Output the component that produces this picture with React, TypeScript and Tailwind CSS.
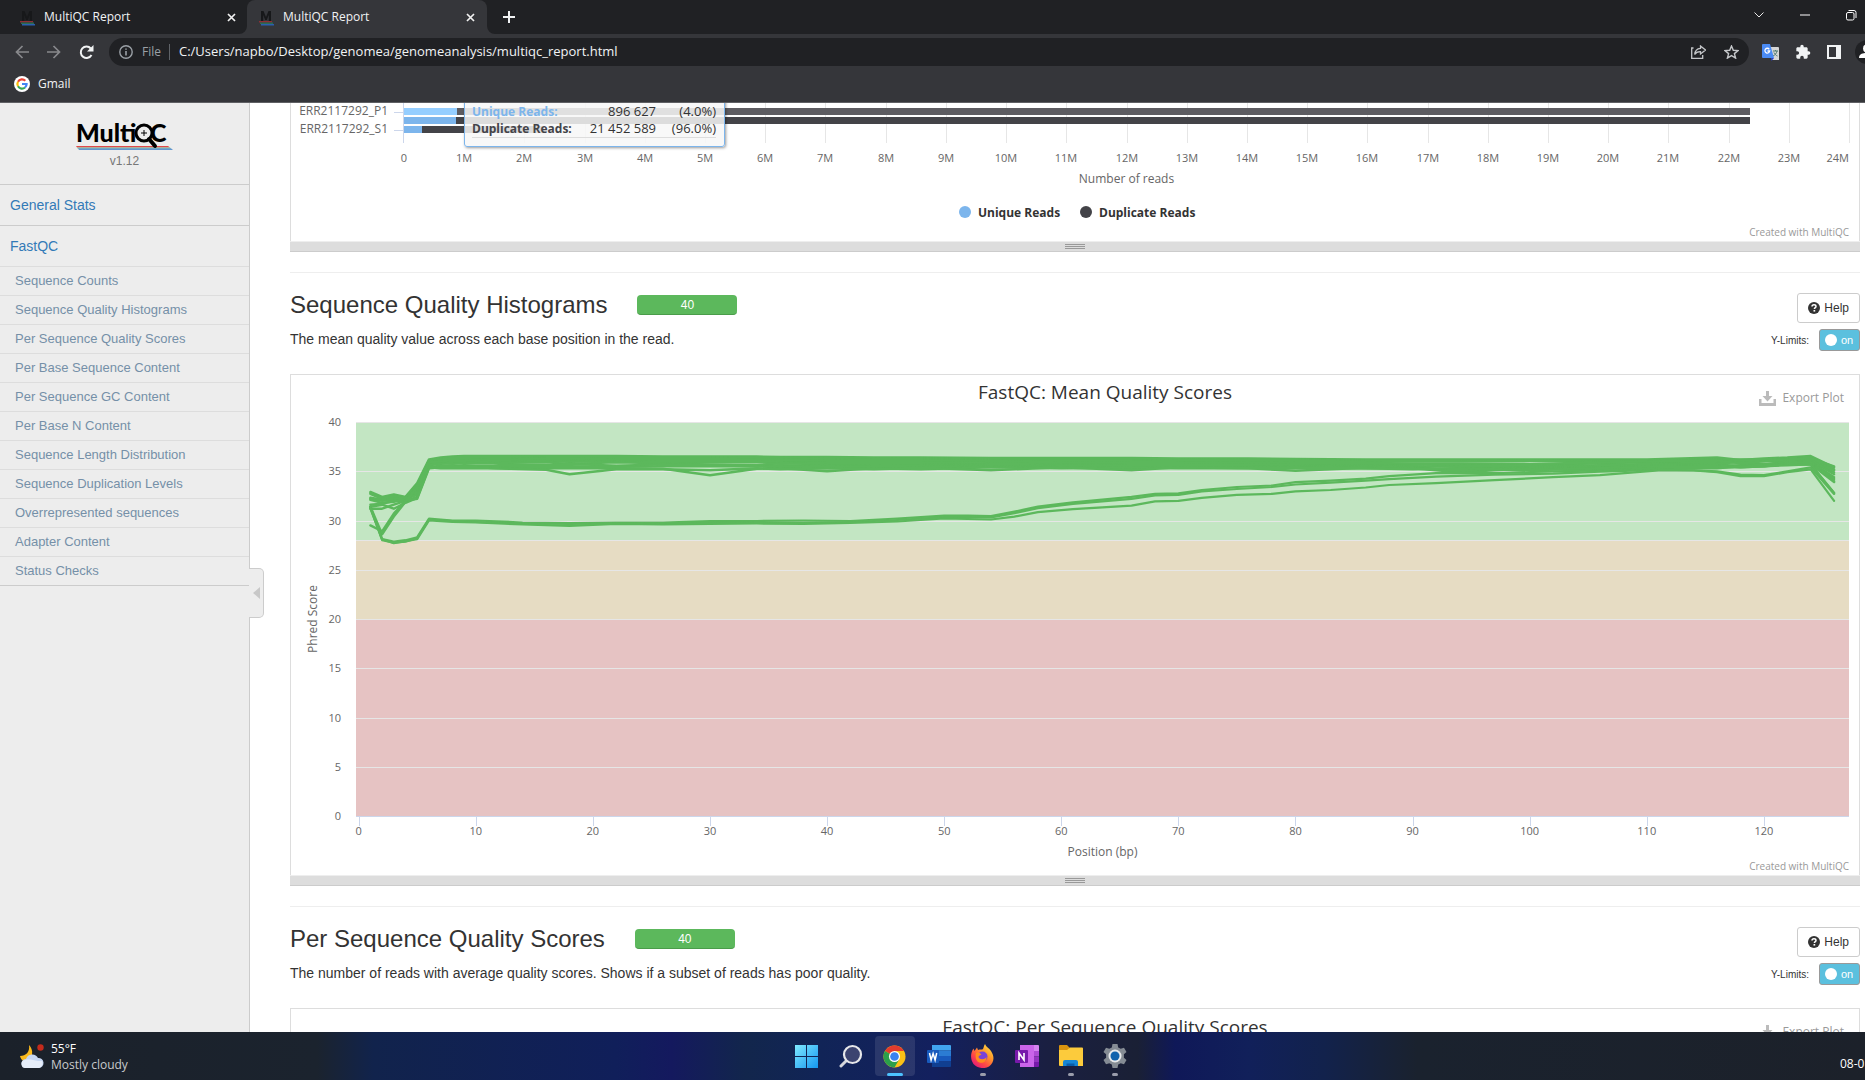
import { useLayoutEffect, useRef, useState, type ReactNode } from "react";

/* ---------- data ---------- */

const fastqcLinks = [
  "Sequence Counts",
  "Sequence Quality Histograms",
  "Per Sequence Quality Scores",
  "Per Base Sequence Content",
  "Per Sequence GC Content",
  "Per Base N Content",
  "Sequence Length Distribution",
  "Sequence Duplication Levels",
  "Overrepresented sequences",
  "Adapter Content",
  "Status Checks",
];

const bases = [
  1, 2, 3, 4, 5, 6, 7, 8, 9, 11, 13, 16, 18, 22, 26, 30, 34, 36, 40, 44, 48, 54, 60, 66, 70, 76, 80, 86, 90, 94, 100, 106,
  110, 116, 118, 120, 122, 124, 126,
];

const highReads: number[][] = [
  [32.9, 32.4, 32.65, 32.4, 33.8, 36.2, 36.4, 36.5, 36.55, 36.55, 36.55, 36.55, 36.55, 36.55, 36.5, 36.5, 36.5, 36.45, 36.45, 36.4, 36.4, 36.35, 36.35, 36.35, 36.3, 36.3, 36.25, 36.2, 36.2, 36.2, 36.2, 36.2, 36.2, 36.4, 36.15, 36.3, 36.4, 36.55, 35.4],
  [32.8, 32.3, 32.5, 32.3, 33.6, 36.1, 36.3, 36.4, 36.45, 36.45, 36.45, 36.4, 36.4, 36.4, 36.4, 36.4, 36.35, 36.35, 36.3, 36.3, 36.25, 36.2, 36.2, 36.2, 36.2, 36.15, 36.15, 36.1, 36.1, 36.1, 36.1, 36.1, 36.1, 36.15, 36.2, 36.2, 36.3, 36.4, 35.2],
  [32.7, 32.2, 32.4, 32.2, 33.3, 36, 36.2, 36.3, 36.3, 36.3, 36.3, 36.25, 36.25, 36.25, 36.25, 36.25, 36.2, 36.2, 36.2, 36.15, 36.15, 36.1, 36.1, 36.1, 36.05, 36.05, 36.05, 36, 36, 36, 36.05, 36, 36, 36.05, 36.1, 36.1, 36.2, 36.3, 35.1],
  [32.3, 32.1, 32.2, 32.3, 33, 35.9, 36.05, 36.15, 36.15, 36.15, 36.15, 36.1, 36.1, 36.1, 36.1, 36.1, 36.1, 36.05, 36.05, 36, 36, 35.95, 35.95, 35.95, 35.9, 35.85, 35.75, 35.7, 35.75, 35.7, 35.6, 35.8, 35.9, 35.9, 36, 36, 36.1, 36.2, 34.9],
  [32.2, 32, 32.1, 32.1, 32.8, 35.8, 35.95, 36, 36.05, 36, 36, 36, 35.95, 36, 35.95, 35.95, 35.95, 35.9, 35.85, 35.85, 35.85, 35.8, 35.8, 35.8, 35.75, 35.7, 35.7, 35.65, 35.7, 35.6, 35.5, 35.6, 35.75, 35.8, 35.9, 35.7, 36, 36.1, 34.7],
  [32.1, 31.8, 31.9, 32.2, 32.6, 35.7, 35.85, 35.9, 35.9, 35.9, 35.85, 35.9, 35.75, 35.9, 35.8, 35.7, 35.65, 35.8, 35.7, 35.7, 35.7, 35.65, 35.65, 35.6, 35.65, 35.6, 35.6, 35.55, 35.5, 35.45, 35.45, 35.5, 35.6, 35.7, 35.5, 35.7, 35.9, 36, 34.4],
  [31.6, 31.7, 32, 32, 32.4, 35.6, 35.75, 35.8, 35.75, 35.8, 35.7, 35.6, 35.75, 35.55, 35.7, 35.65, 35.55, 35.6, 35.55, 35.6, 35.55, 35.5, 35.55, 35.5, 35.5, 35.5, 35.45, 35.5, 35.4, 35.1, 35.4, 35.35, 35.5, 35.6, 35.4, 35.5, 35.8, 35.9, 34.2],
  [31.4, 31.6, 31.2, 31.8, 32.3, 35.4, 35.55, 35.6, 35.5, 35.5, 35.5, 35.5, 35.5, 35.45, 35.5, 35.5, 35.5, 35.4, 35.45, 35.4, 35.4, 35.45, 35.4, 35.4, 35.4, 35.35, 35.4, 35.3, 35.3, 34.9, 35.3, 35.3, 35.4, 35.5, 35.6, 35.7, 35.8, 35.8, 34],
  [31.2, 31.2, 31.6, 32, 32.2, 35.3, 35.4, 35.4, 35.45, 35.35, 35.3, 35.3, 35.3, 35.3, 35.25, 34.6, 35.25, 35.3, 35, 35.3, 35.2, 35.4, 35.3, 35.35, 35.3, 35.3, 35.05, 35.35, 35.3, 35.1, 35.3, 35.25, 35.3, 35.4, 35.5, 35.6, 35.7, 35.7, 33.9],
  [29.5, 28.9, 30.7, 32, 33.2, 35.4, 35.3, 35.3, 35.3, 35.3, 35.25, 35.15, 34.7, 35.2, 35.2, 35.1, 35.3, 35.2, 35.3, 35.2, 35.35, 35.1, 35.4, 35.1, 35.4, 35.3, 35.3, 35.3, 35.2, 35.3, 35.1, 35.3, 35.4, 35.4, 35.4, 35.5, 35.7, 35.7, 32.8],
  [31.4, 28.6, 30.4, 31.9, 33.4, 35.9, 36, 36.1, 36.1, 36.2, 36.2, 36.3, 36.3, 36.2, 36.2, 36.2, 36.2, 36.15, 36.1, 36.1, 36.1, 36.05, 35.9, 35.85, 35.85, 35.9, 35.85, 35.85, 35.8, 35.8, 35.75, 35.9, 36, 36.1, 35.8, 36, 36.2, 36.3, 35.5],
];

const lowBases = [
  1, 2, 3, 4, 5, 6, 8, 10, 14, 18, 22, 26, 30, 34, 38, 42, 46, 50, 52, 54, 56, 58, 61, 66, 68, 70, 72, 75, 78, 80, 83, 86, 88, 92, 97,
  102, 106, 111, 114, 116, 118, 120, 122, 124, 126,
];

const lowReads: number[][] = [
  [31.4, 28.1, 27.85, 28, 28.3, 30.2, 30, 30, 29.8, 29.75, 29.8, 29.8, 29.95, 29.95, 30, 29.95, 30.2, 30.5, 30.5, 30.45, 30.9, 31.4, 31.85, 32.4, 32.7, 32.75, 33.1, 33.4, 33.55, 33.9, 34.05, 34.25, 34.5, 34.8, 34.8, 35, 35.1, 35.3, 35.3, 35.3, 35.5, 35.5, 35.6, 35.7, 32.8],
  [31.3, 28, 27.75, 27.85, 28.2, 30.1, 29.95, 29.85, 29.7, 29.65, 29.7, 29.75, 29.75, 29.8, 29.8, 29.85, 30.05, 30.35, 30.35, 30.3, 30.75, 31.25, 31.7, 32.2, 32.55, 32.6, 32.95, 33.2, 33.4, 33.65, 33.85, 34.05, 34.2, 34.45, 34.65, 34.75, 34.95, 35.15, 35.1, 35, 34.65, 34.6, 35, 35.4, 32.7],
  [31.2, 28.1, 27.7, 27.9, 28.1, 30, 29.85, 29.8, 29.6, 29.45, 29.65, 29.6, 29.65, 29.7, 29.65, 29.75, 29.9, 30.2, 30.15, 30.1, 30.4, 30.85, 31.15, 31.5, 31.95, 32, 32.3, 32.6, 32.7, 32.95, 33.1, 33.35, 33.6, 33.8, 34.1, 34.4, 34.6, 35.1, 35.1, 34.9, 34.5, 34.5, 34.9, 35.2, 32],
];

/* ---------- chart helpers ---------- */

function useWidth() {
  const ref = useRef<HTMLDivElement>(null);
  const [width, setWidth] = useState(1568);
  useLayoutEffect(() => {
    const el = ref.current;
    if (!el) return;
    const update = () => setWidth(el.clientWidth);
    update();
    const observer = new ResizeObserver(update);
    observer.observe(el);
    return () => observer.disconnect();
  }, []);
  return { ref, width };
}

function Panel({ children, open }: { children: ReactNode; open?: boolean }) {
  return (
    <div className={open ? "border-x border-[#ddd]" : "border border-b-0 border-[#ddd]"}>
      {children}
      <div className="-mx-px flex h-[11px] items-center justify-center border-t border-b border-t-[#eee] border-b-[#ccc] bg-[#ddd]">
        <div className="flex flex-col gap-px">
          <div className="h-px w-5 bg-[#999]" />
          <div className="h-px w-5 bg-[#999]" />
          <div className="h-px w-5 bg-[#999]" />
        </div>
      </div>
    </div>
  );
}

function CountsChart() {
  const { ref, width } = useWidth();
  const left = 113;
  const right = width - 10;
  const x = (millions: number) => Math.round(left + ((right - left) * millions) / 24);
  const rows = [
    { y: 5, unique: 0.88, total: 22.35, light: true },
    { y: 14, unique: 0.86, total: 22.35, light: false },
    { y: 23, unique: 0.3, total: 2.33, light: false },
  ];
  return (
    <div ref={ref} className="relative h-[138px]">
      <svg width={width} height={138} className="block overflow-hidden font-['Open_Sans',sans-serif]">
        {Array.from({ length: 24 }, (_, i) => (
          <rect key={i} x={x(i + 1)} y={0} width={1} height={40} fill="#e6e6e6" />
        ))}
        <rect x={left - 1} y={0} width={1} height={40} fill="#ccd6eb" />
        <rect x={left - 10} y={9} width={10} height={1} fill="#ccd6eb" />
        <rect x={left - 10} y={27} width={10} height={1} fill="#ccd6eb" />
        {rows.map((r) => (
          <g key={r.y}>
            <rect x={x(r.unique)} y={r.y} width={x(r.total) - x(r.unique)} height={7} fill={r.light ? "#5d5c61" : "#434348"} />
            <rect x={left} y={r.y} width={x(r.unique) - left} height={7} fill={r.light ? "#95ceff" : "#7cb5ec"} />
          </g>
        ))}
        <g className="text-[12px]" fill="#666" textAnchor="end">
          <text x={97} y={12}>ERR2117292_P1</text>
          <text x={97} y={30}>ERR2117292_S1</text>
        </g>
        <g className="text-[11px]" fill="#666">
          {Array.from({ length: 25 }, (_, i) => (
            <text key={i} x={i === 24 ? right : x(i)} y={59} textAnchor={i === 24 ? "end" : "middle"}>
              {i === 0 ? "0" : `${i}M`}
            </text>
          ))}
        </g>
        <text x={(left + right) / 2} y={80} textAnchor="middle" className="text-[12px]" fill="#666">
          Number of reads
        </text>
        <g className="text-[12px] font-bold" fill="#333" transform={`translate(${Math.round(width / 2) - 110} 0)`}>
          <circle cx={0} cy={109} r={6} fill="#7cb5ec" />
          <text x={13} y={114}>Unique Reads</text>
          <circle cx={121} cy={109} r={6} fill="#434348" />
          <text x={134} y={114}>Duplicate Reads</text>
        </g>
        <text x={right} y={133} textAnchor="end" className="text-[10px]" fill="#999">
          Created with MultiQC
        </text>
      </svg>
      <div
        className="absolute -top-4 w-[261px] rounded-[3px] border border-[#7cb5ec] bg-[#f7f7f7]/85 pt-[15px] pr-2 pb-2 pl-[7px] font-['Open_Sans',sans-serif] text-[#333] shadow-[1px_1px_3px_rgba(0,0,0,0.4)]"
        style={{ left: x(1) }}
      >
        <table className="w-full border-collapse leading-[17px]">
          <tbody>
            <tr>
              <th scope="row" className="p-0 text-left text-[12px] font-bold text-[#7cb5ec]">Unique Reads:</th>
              <td className="p-0 text-right text-[13px]">896 627</td>
              <td className="w-[60px] p-0 text-right text-[13px]">(4.0%)</td>
            </tr>
            <tr className="border-b border-[#ddd]">
              <th scope="row" className="p-0 text-left text-[12px] font-bold text-[#434348]">Duplicate Reads:</th>
              <td className="p-0 text-right text-[13px]">21 452 589</td>
              <td className="w-[60px] p-0 text-right text-[13px]">(96.0%)</td>
            </tr>
          </tbody>
        </table>
      </div>
    </div>
  );
}

function ExportButton() {
  return (
    <button type="button" className="absolute top-[14px] right-[15px] flex items-center gap-[6px] font-['Open_Sans',sans-serif] text-[12px] leading-[18px] text-[#999]">
      <svg width="17" height="15" viewBox="0 0 17 15" fill="#bbb">
        <path d="M7 0h3v5h3.5l-5 5.5L3.5 5H7z" />
        <path d="M0 8h2.500v4h12V8H17v7H0z" />
      </svg>
      Export Plot
    </button>
  );
}

function QualityChart() {
  const { ref, width } = useWidth();
  const left = 65;
  const right = width - 10;
  const x = (bp: number) => left + ((right - left) * (bp + 0.23)) / 127.5;
  const y = (q: number) => 441 - q * 9.85;
  const points = (xs: number[], ys: number[]) => ys.map((v, i) => `${x(xs[i]).toFixed(1)},${y(v).toFixed(1)}`).join(" ");
  const bands = [
    { from: 28, to: 40, fill: "#c3e6c3" },
    { from: 20, to: 28, fill: "#e6dcc3" },
    { from: 0, to: 20, fill: "#e6c3c3" },
  ];
  return (
    <div ref={ref} className="relative h-[500px]">
      <svg width={width} height={500} className="block font-['Open_Sans',sans-serif]">
        <text x={width / 2 + 30} y={24} textAnchor="middle" className="text-[19px]" fill="#333">
          FastQC: Mean Quality Scores
        </text>
        {bands.map((b) => (
          <rect key={b.from} x={left} width={right - left} y={Math.round(y(b.to))} height={Math.round(y(b.from)) - Math.round(y(b.to))} fill={b.fill} />
        ))}
        {[5, 10, 15, 20, 25, 28, 30, 35, 40].map((q) => (
          <rect key={q} x={left} width={right - left} y={Math.round(y(q))} height={1} fill="#e6e6e6" />
        ))}
        <rect x={left} y={441} width={right - left} height={1} fill="#ccd6eb" />
        <g className="text-[11px]" fill="#666">
          {[0, 5, 10, 15, 20, 25, 30, 35, 40].map((q) => (
            <text key={q} x={50} y={Math.round(y(q)) + 4} textAnchor="end">{q}</text>
          ))}
          {[0, 10, 20, 30, 40, 50, 60, 70, 80, 90, 100, 110, 120].map((bp) => (
            <g key={bp}>
              <rect x={Math.round(x(bp))} y={441} width={1} height={10} fill="#ccd6eb" />
              <text x={x(bp)} y={460} textAnchor="middle">{bp}</text>
            </g>
          ))}
        </g>
        <g className="text-[12px]" fill="#666" textAnchor="middle">
          <text x={(left + right) / 2} y={481}>Position (bp)</text>
          <text transform="translate(26 244) rotate(-90)">Phred Score</text>
        </g>
        <g fill="none" stroke="#5cb85c" strokeLinejoin="round" strokeLinecap="round">
          {highReads.map((r, i) => (
            <polyline key={i} points={points(bases, r)} strokeWidth={2.4} />
          ))}
          {lowReads.map((r, i) => (
            <polyline key={i} points={points(lowBases, r)} strokeWidth={2.2} />
          ))}
        </g>
        <text x={right} y={495} textAnchor="end" className="text-[10px]" fill="#999">
          Created with MultiQC
        </text>
      </svg>
      <ExportButton />
    </div>
  );
}

function ScoresChart() {
  const { ref, width } = useWidth();
  return (
    <div ref={ref} className="relative h-[500px]">
      <svg width={width} height={500} className="block font-['Open_Sans',sans-serif]">
        <text x={width / 2 + 30} y={25} textAnchor="middle" className="text-[19px]" fill="#333">
          FastQC: Per Sequence Quality Scores
        </text>
      </svg>
      <ExportButton />
    </div>
  );
}

function Section({ title, text, children }: { title: string; text: string; children: ReactNode }) {
  return (
    <section className="mt-5 border-t border-[#eee] pt-5">
      <div className="flex justify-between pb-[23px]">
        <div>
          <div className="flex h-6 items-center gap-[30px]">
            <h3 className="text-[24px] leading-[26px] text-[#333]">{title}</h3>
            <div className="h-5 w-[100px] rounded-[4px] border-b border-[#4a9c4a] bg-[#5cb85c] text-center text-[12px] leading-5 text-white">40</div>
          </div>
          <p className="mt-3 text-[14px] leading-5 text-[#333]">{text}</p>
        </div>
        <div className="flex flex-col items-end gap-[6px]">
          <button type="button" className="flex h-[30px] items-center gap-1 rounded-[3px] border border-[#ccc] bg-white px-[10px] text-[12px] text-[#333]">
            <svg width="12" height="12" viewBox="0 0 12 12">
              <circle cx="6" cy="6" r="6" fill="#333" />
              <path d="M4 4.6C4 3.4 4.9 2.7 6 2.7s2 .7 2 1.7c0 1.2-1.6 1.2-1.6 2.5" fill="none" stroke="#fff" strokeWidth="1.5" />
              <rect x="5.5" y="8" width="1.7" height="1.6" fill="#fff" />
            </svg>
            Help
          </button>
          <div className="flex items-center gap-[10px] text-[10px] text-[#333]">
            <span>Y-Limits:</span>
            <button type="button" aria-label="Y-Limits on" className="flex h-[22px] w-[41px] items-center gap-1 rounded-[3px] border border-[#999] bg-[#5bc0de] px-[5px] text-[11px] text-white">
              <span className="size-3 rounded-full bg-white" />
              on
            </button>
          </div>
        </div>
      </div>
      {children}
    </section>
  );
}

/* ---------- browser chrome ---------- */

function Favicon() {
  return (
    <svg width="15" height="17" viewBox="0 0 15 17">
      <path d="M2 12V2h2.500L7 8l2.500-6H12v10h-2.200V6L7.800 11H6.200L4.200 6v6z" fill="#17181a" />
      <path d="M0 12h13v1.500H0z" fill="#8f2f35" />
      <path d="M1 13.500h13V15H1z" fill="#2c6b52" />
      <path d="M2 15h13v1.500H2z" fill="#2a5fae" />
    </svg>
  );
}

function Cross() {
  return (
    <svg width="9" height="9" viewBox="0 0 9 9" stroke="#f1f1f1" strokeWidth="1.700">
      <path d="M1 1l7 7M8 1L1 8" />
    </svg>
  );
}

function Tab({ active }: { active?: boolean }) {
  return (
    <div
      className={
        active
          ? "relative flex h-[34px] w-60 items-center rounded-t-lg bg-[#35363a] pr-3 pl-3"
          : "flex h-[34px] w-[247px] items-center pr-[11px] pl-5"
      }
    >
      {active && (
        <>
          <svg className="absolute bottom-0 -left-2" width="8" height="8"><path d="M8 0v8H0a8 8 0 0 0 8-8z" fill="#35363a" /></svg>
          <svg className="absolute -right-2 bottom-0" width="8" height="8"><path d="M0 0v8h8a8 8 0 0 1-8-8z" fill="#35363a" /></svg>
        </>
      )}
      <Favicon />
      <span className="ml-[9px] flex-1">MultiQC Report</span>
      <button type="button" aria-label="Close tab"><Cross /></button>
    </div>
  );
}

function Chrome() {
  return (
    <header className="shrink-0 overflow-hidden border-b border-[#5f6064] bg-[#35363a] font-['Open_Sans',sans-serif] text-[12px] text-[#f1f3f4]">
      <div className="flex h-[34px] items-center bg-[#202124]">
        <Tab />
        <Tab active />
        <button type="button" aria-label="New tab" className="ml-4">
          <svg width="12" height="12" stroke="#f1f3f4" strokeWidth="2"><path d="M6 0v12M0 6h12" /></svg>
        </button>
        <div className="-mr-[2px] ml-auto flex items-center gap-[36px] pb-1">
          <svg width="10" height="6" fill="none" stroke="#e8e8e8"><path d="M.5.500L5 5L9.500.500" /></svg>
          <svg width="10" height="10" fill="#fff"><path d="M0 4.500h10v1H0z" /></svg>
          <svg width="21" height="11" fill="none" stroke="#fff"><rect x=".5" y="2.500" width="7.500" height="7.500" rx="1.500" /><path d="M2.500.500H8a2 2 0 0 1 2 2V8" /></svg>
        </div>
      </div>
      <div className="flex h-9 items-center">
        <div className="flex w-[109px] shrink-0 items-center gap-[18px] pl-[15px]">
          <button type="button" aria-label="Back">
            <svg width="14" height="14" fill="none" stroke="#88898c" strokeWidth="1.700"><path d="M14 7H1.500M7.500 1L1.500 7l6 6" /></svg>
          </button>
          <button type="button" aria-label="Forward">
            <svg width="14" height="14" fill="none" stroke="#88898c" strokeWidth="1.700"><path d="M0 7h12.500M6.500 1l6 6l-6 6" /></svg>
          </button>
          <button type="button" aria-label="Reload">
            <svg width="15" height="15" viewBox="0 0 15 15"><path d="M12.500 10A5.700 5.700 0 1 1 11.800 3.500" fill="none" stroke="#f1f3f4" strokeWidth="2" /><path d="M14.500 0v6.500H8z" fill="#f1f3f4" /></svg>
          </button>
        </div>
        <div className="flex h-7 flex-1 items-center rounded-full bg-[#202124] px-[10px]">
          <svg width="14" height="14" viewBox="0 0 14 14" fill="none" stroke="#9aa0a6" strokeWidth="1.400"><circle cx="7" cy="7" r="6.200" /><path d="M7 6v4.500M7 3.400v1.400" strokeWidth="1.600" /></svg>
          <span className="ml-[9px] text-[#9aa0a6]">File</span>
          <span className="mr-[9px] ml-[8px] h-4 w-px bg-[#5f6368]" />
          <input aria-label="Address" defaultValue="C:/Users/napbo/Desktop/genomea/genomeanalysis/multiqc_report.html" className="flex-1 bg-transparent text-[13px] text-[#f1f3f4] outline-none" />
          <svg className="mr-[18px]" width="15" height="14" viewBox="0 0 15 14" fill="none" stroke="#c4c6c9" strokeWidth="1.300"><path d="M2.500 3H.7v10.300h11V10" /><path d="M9.500 1l5 4l-5 4V6.600C6.500 6.500 4.800 7.500 3.700 9.500c.3-3.500 2.300-5.800 5.800-6.100z" /></svg>
          <svg width="15" height="14" viewBox="0 0 15 14" fill="none" stroke="#c4c6c9" strokeWidth="1.400"><path d="M7.500 1l1.800 4.300l4.700.3l-3.600 3l1.200 4.500l-4.100-2.500l-4.100 2.500l1.200-4.500L1 5.600l4.700-.3z" /></svg>
        </div>
        <div className="-mr-[14px] flex shrink-0 items-center pl-[13px]">
          <svg width="17" height="17" viewBox="0 0 17 17"><path d="M7 3h9a1 1 0 0 1 1 1v12H10z" fill="#d6d6d6" /><path d="M11 7h5M13.500 6v1M15 7c-.5 2.500-2 4-4 5M12 8.500c.7 1.500 2 3 3.500 3.500" stroke="#4f7a70" fill="none" /><path d="M1 0h7l4 14H1a1 1 0 0 1-1-1V1a1 1 0 0 1 1-1z" fill="#4a8bf5" /><path d="M9 14h3l-2.500 3z" fill="#2a3fc0" /><path d="M7.300 5.300A2.400 2.400 0 1 0 7.700 7H5.500" fill="none" stroke="#fff" strokeWidth="1.300" /></svg>
          <svg className="ml-4" width="16" height="16" viewBox="0 0 24 24" fill="#f1f3f4"><path d="M20.500 11H19V7c0-1.100-.9-2-2-2h-4V3.500a2.500 2.500 0 0 0-5 0V5H4c-1.100 0-2 .9-2 2v3.800h1.500a2.700 2.700 0 0 1 0 5.400H2V20c0 1.100.9 2 2 2h3.800v-1.500a2.700 2.700 0 0 1 5.400 0V22H17c1.100 0 2-.9 2-2v-4h1.500a2.500 2.500 0 0 0 0-5z" /></svg>
          <svg className="ml-4" width="14" height="14"><path d="M0 0h14v14H0zM2 2v10h7V2z" fillRule="evenodd" fill="#f1f3f4" /></svg>
          <svg className="ml-[14px]" width="24" height="24"><circle cx="12" cy="12" r="12" fill="#202124" /><circle cx="12" cy="8.500" r="4" fill="#fff" /><path d="M4 18c0-4 4-5 8-5s8 1 8 5z" fill="#fff" /></svg>
        </div>
      </div>
      <nav className="flex h-8 items-center pb-1 pl-[14px]">
        <a href="#gmail" className="flex items-center gap-2">
          <svg width="16" height="16" viewBox="0 0 16 16"><circle cx="8" cy="8" r="8" fill="#fff" /><g fill="none" strokeWidth="2.200"><path d="M11.300 4.700A4.600 4.600 0 0 0 4 5.700" stroke="#ea4335" /><path d="M4 5.700a4.600 4.600 0 0 0 0 4.600" stroke="#fbbc05" /><path d="M4 10.300a4.600 4.600 0 0 0 7 1.200" stroke="#34a853" /><path d="M11 11.500A4.600 4.600 0 0 0 12.600 8H8" stroke="#4285f4" /></g></svg>
          <span>Gmail</span>
        </a>
      </nav>
    </header>
  );
}

/* ---------- sidebar ---------- */

function Sidebar() {
  return (
    <aside className="relative w-[250px] shrink-0 border-r border-[#ccc] bg-[#ededed]">
      <div className="flex h-[81px] flex-col items-center pt-[18px]">
        <svg width="98" height="29" viewBox="0 0 98 29" className="overflow-visible font-['Lato',sans-serif] text-[25px] font-black" role="img" aria-label="MultiQC">
          <path d="M0 25h92l2 1.500H1z" fill="#e0484a" />
          <path d="M1 26.500h93l1 1H1.500z" fill="#7cc49a" />
          <path d="M2 27.500h93l2 1.200H3z" fill="#3478c5" />
          <text x="0" y="21">Multi</text>
          <text x="74" y="21">C</text>
          <circle cx="68" cy="12" r="8" fill="#ededed" stroke="#000" strokeWidth="3" />
          <path d="M68 9v6M65 12h6" stroke="#000" strokeWidth="1" />
          <path d="M73 18l6 7" stroke="#000" strokeWidth="4" strokeLinecap="round" />
        </svg>
        <p className="mt-[3px] text-[12px] leading-[16px] text-[#777]">v1.12</p>
      </div>
      <nav className="border-b border-[#ccc]">
        <a href="#general_stats" className="block h-[41px] border-t border-[#ccc] pl-[10px] text-[14px] leading-10 text-[#337ab7]">General Stats</a>
        <a href="#fastqc" className="block h-[41px] border-t border-[#ccc] pl-[10px] text-[14px] leading-10 text-[#337ab7]">FastQC</a>
        {fastqcLinks.map((label) => (
          <a key={label} href={`#${label.toLowerCase().replaceAll(" ", "_")}`} className="block h-[29px] border-t border-[#ddd] pl-[15px] text-[13px] leading-7 text-[#7590a8]">
            {label}
          </a>
        ))}
      </nav>
      <button type="button" aria-label="Hide sidebar" className="absolute top-[465px] -right-[15px] flex h-[50px] w-[15px] items-center rounded-r-[5px] border border-l-0 border-[#ccc] bg-[#ededed] pl-1">
        <svg width="7" height="12"><path d="M7 0v12L0 6z" fill="#c8c8c8" /></svg>
      </button>
    </aside>
  );
}

/* ---------- taskbar ---------- */

function TaskIcon({ label, mark, active, children }: { label: string; mark?: boolean; active?: boolean; children: ReactNode }) {
  return (
    <button
      type="button"
      aria-label={label}
      className={active ? "relative flex size-10 items-center justify-center rounded bg-white/10" : "relative flex size-10 items-center justify-center"}
    >
      {children}
      {active && <span className="absolute bottom-0 h-[3px] w-4 rounded-full bg-[#4cc2ff]" />}
      {mark && <span className="absolute bottom-0 h-[3px] w-[6px] rounded-full bg-[#9a9dab]" />}
    </button>
  );
}

function Taskbar() {
  return (
    <footer className="relative flex h-12 shrink-0 items-center justify-center overflow-hidden bg-[linear-gradient(90deg,#1b212a_0%,#1b232e_17%,#11234c_20%,#101f5a_33%,#14195e_36%,#12264c_40%,#112457_44%,#13205e_50%,#1a1f42_56%,#1a2035_61%,#0f1858_63%,#11205a_67%,#12224c_71%,#1a222e_76%,#1c212a_100%)] font-['Open_Sans',sans-serif] text-[12px] text-white">
      <button type="button" className="absolute top-0 left-5 flex h-12 items-center gap-[7px] pt-px text-left leading-4">
        <svg width="24" height="26" viewBox="0 0 24 26">
          <path d="M9 1c5 5 4 13-2 17-3 0-6-2-7-6 6 0 10-4 9-11z" fill="#f9b91c" />
          <path d="M6 24a4.500 4.500 0 0 1 0-9 6.500 6.500 0 0 1 12-1 5 5 0 0 1 1 10z" fill="#c5d6f2" />
          <path d="M6 24a4 4 0 0 1-1-8c4-1 8 0 13 1h4a5 5 0 0 1-3 7z" fill="#e6edf9" />
          <circle cx="20.500" cy="3.500" r="3.200" fill="#c42b1c" />
        </svg>
        <span>
          <span className="block">55°F</span>
          <span className="block text-[#c8cacd]">Mostly cloudy</span>
        </span>
      </button>
      <nav className="flex gap-1 pl-14">
        <TaskIcon label="Start">
          <svg width="23" height="23"><defs><linearGradient id="win" x1="0" y1="0" x2="1" y2="1"><stop offset="0" stopColor="#7fe9ff" /><stop offset="1" stopColor="#1496f0" /></linearGradient></defs><path d="M0 0h11v11H0zM12 0h11v11H12zM0 12h11v11H0zM12 12h11v11H12z" fill="url(#win)" /></svg>
        </TaskIcon>
        <TaskIcon label="Search">
          <svg width="24" height="24" viewBox="0 0 24 24"><path d="M8 16l-6 6" stroke="#d5d7dc" strokeWidth="3" strokeLinecap="round" /><circle cx="13.500" cy="10.500" r="8.500" fill="#3b4370" stroke="#e6e7ea" strokeWidth="2.200" /></svg>
        </TaskIcon>
        <TaskIcon label="Google Chrome" active>
          <svg width="23" height="23" viewBox="0 0 48 48"><circle cx="24" cy="24" r="23" fill="#fbc116" /><path d="M24 24L4.100 12.500A23 23 0 0 1 43.900 12.500H24z" fill="#e33b2e" /><path d="M4.100 12.500A23 23 0 0 0 24 47l10-17.300L24 24z" fill="#2a9f4b" /><path d="M24 12.500h19.900L34 30z" fill="#fbc116" /><circle cx="24" cy="24" r="11.500" fill="#fff" /><circle cx="24" cy="24" r="9" fill="#3a82f0" /></svg>
        </TaskIcon>
        <TaskIcon label="Word">
          <svg width="24" height="22" viewBox="0 0 24 22"><path d="M5 0h18a1 1 0 0 1 1 1v4.500H5z" fill="#41a5ee" /><path d="M5 5.500h19V11H5z" fill="#2b7cd3" /><path d="M5 11h19v5.500H5z" fill="#185abd" /><path d="M5 16.500h19V21a1 1 0 0 1-1 1H5z" fill="#103f91" /><rect y="5" width="12" height="13" rx="1" fill="#185abd" /><path d="M2.500 8l1.600 7l2-6.500l2 6.500l1.600-7" fill="none" stroke="#fff" strokeWidth="1.500" /></svg>
        </TaskIcon>
        <TaskIcon label="Firefox" mark>
          <svg width="23" height="24" viewBox="0 0 23 24"><defs><linearGradient id="fox" x1="1" y1="0" x2="0.200" y2="1"><stop offset="0" stopColor="#fff44f" /><stop offset="0.400" stopColor="#ff9a2a" /><stop offset="0.700" stopColor="#ff4a45" /><stop offset="1" stopColor="#e0157d" /></linearGradient></defs><path d="M14 0c1 3 4 4 6 7 4 6 3 12-2 15.500-5 3-12 1.500-15.500-2.500C-1 15-.5 9 2.500 4.500L3.500 7 6 3.500 7 6c2-1 4 0 5-1 1-1.500.5-3 2-5z" fill="url(#fox)" /><circle cx="11.500" cy="12.500" r="5" fill="#7a42d8" /><path d="M5 9c2-1 4 0 5.500 1.500-1 1-3 1-3 2.500 1 3 6 3 8 0 0 5-4 6.500-7 5.500-3.500-1-4.500-5.500-3.500-9.500z" fill="#ff8a1f" /></svg>
        </TaskIcon>
        <TaskIcon label="OneNote">
          <svg width="24" height="22" viewBox="0 0 24 22"><path d="M5 0h14v22H5z" fill="#ca64ea" /><path d="M19 0h4a1 1 0 0 1 1 1v5h-5z" fill="#d583f0" /><path d="M19 6h5v5.500h-5z" fill="#ae4bd5" /><path d="M19 11.500h5V17h-5z" fill="#9332bf" /><path d="M19 17h5v4a1 1 0 0 1-1 1h-4z" fill="#7719aa" /><rect y="5" width="13" height="13" rx="1" fill="#7719aa" /><path d="M4 15V8l5 7V8" fill="none" stroke="#fff" strokeWidth="1.600" /></svg>
        </TaskIcon>
        <TaskIcon label="File Explorer" mark>
          <svg width="24" height="22" viewBox="0 0 24 22"><path d="M0 1a1 1 0 0 1 1-1h7l3 3h-1v4H0z" fill="#d9930f" /><path d="M0 5h8l3-2.500h12a1 1 0 0 1 1 1V21H1a1 1 0 0 1-1-1z" fill="#fccb3c" /><path d="M4 21v-4a2 2 0 0 1 2-2h11a2 2 0 0 1 2 2v4z" fill="#1785d3" /><path d="M7.500 21v-2.500h8V21z" fill="#0a5ca8" /></svg>
        </TaskIcon>
        <TaskIcon label="Settings" mark>
          <svg width="24" height="24" viewBox="0 0 24 24"><path d="M9.500 0h5l.7 3.400 2.500 1.400L21 3.700l2.500 4.300-2.600 2.300v3.400l2.600 2.300-2.500 4.300-3.300-1.100-2.500 1.400-.7 3.400h-5l-.7-3.400-2.500-1.400L3 20.300.5 16l2.600-2.300v-3.400L.5 8 3 3.700l3.300 1.100 2.500-1.400z" fill="#858c94" /><circle cx="12" cy="12" r="6.500" fill="#e8eaec" /><circle cx="12" cy="12" r="4.500" fill="#1263ad" /></svg>
        </TaskIcon>
      </nav>
      <time className="absolute top-6 left-[calc(100%-25px)] leading-4 whitespace-nowrap">08-0</time>
    </footer>
  );
}

export default function App() {
  return (
    <div className="flex h-screen flex-col overflow-hidden bg-white font-['Liberation_Sans',Arial,sans-serif]">
      <Chrome />
      <div className="flex min-h-0 flex-1 overflow-hidden">
        <Sidebar />
        <main className="min-w-0 flex-1 overflow-hidden pr-[5px] pl-10">
          <Panel open>
            <CountsChart />
          </Panel>
          <Section title="Sequence Quality Histograms" text="The mean quality value across each base position in the read.">
            <Panel>
              <QualityChart />
            </Panel>
          </Section>
          <Section title="Per Sequence Quality Scores" text="The number of reads with average quality scores. Shows if a subset of reads has poor quality.">
            <Panel>
              <ScoresChart />
            </Panel>
          </Section>
        </main>
      </div>
      <Taskbar />
    </div>
  );
}
